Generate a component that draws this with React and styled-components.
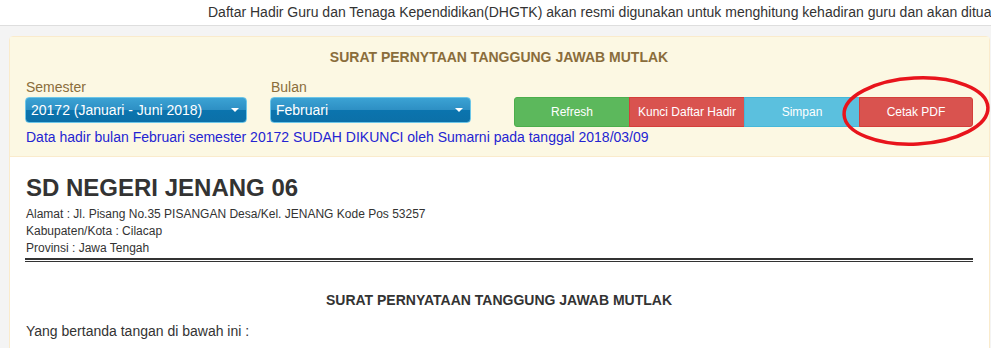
import React from 'react';
import styled, { createGlobalStyle } from 'styled-components';

const GlobalStyle = createGlobalStyle`
  html, body {
    margin: 0;
    padding: 0;
    background: #f4f4f4;
    font-family: "Liberation Sans", Arial, sans-serif;
    color: #333;
    overflow: hidden;
  }
`;

const Page = styled.div`
  position: relative;
  width: 991px;
  height: 348px;
  overflow: hidden;
`;

const TopBar = styled.div`
  height: 25px;
  background: #fff;
  border-bottom: 1px solid #dedede;
  padding-left: 208px;
  font-size: 14px;
  line-height: 24px;
  white-space: nowrap;
  overflow: hidden;
`;

const Content = styled.div`
  padding: 10px 1px 0 9px;
`;

const Panel = styled.div`
  border: 1px solid #faebcc;
  border-radius: 4px 4px 0 0;
  background: #fff;
  height: 400px;
`;

const Heading = styled.div`
  background: #fcf8e3;
  border-bottom: 1px solid #faebcc;
  padding: 11px 16px 9px 15px;
  color: #8a6d3b;
`;

const HeadingTitle = styled.div`
  text-align: center;
  font-weight: bold;
  font-size: 14px;
  line-height: 18px;
  margin-bottom: 11px;
`;

const ControlRow = styled.div`
  display: flex;
  align-items: flex-start;
`;

const Field = styled.div`
  display: flex;
  flex-direction: column;
  width: ${p => p.$width}px;
  margin-right: ${p => p.$gap || 0}px;
`;

const FieldLabel = styled.div`
  font-size: 14px;
  line-height: 20px;
  padding-left: 1px;
`;

const SelectBox = styled.div`
  height: 26px;
  box-sizing: border-box;
  display: flex;
  align-items: center;
  justify-content: space-between;
  padding: 0 7px 0 5px;
  border: 1px solid #6cc6e8;
  border-radius: 4px;
  background: linear-gradient(to bottom, #3ba2d4 0%, #2e90c4 48%, #0b74ae 52%, #0c70a8 100%);
  color: #fff;
  font-size: 14px;
`;

const Caret = styled.span`
  width: 0;
  height: 0;
  border-left: 4px solid transparent;
  border-right: 4px solid transparent;
  border-top: 4px solid #fff;
`;

const ButtonGroup = styled.div`
  display: flex;
  margin-left: auto;
  margin-top: 20px;
`;

const colors = {
  success: ['#5cb85c', '#4cae4c'],
  danger: ['#d9534f', '#d43f3a'],
  info: ['#5bc0de', '#46b8da'],
};

const Button = styled.button`
  width: ${p => p.$width || 115}px;
  height: 30px;
  border: 1px solid ${p => colors[p.$kind][1]};
  background: ${p => colors[p.$kind][0]};
  color: #fff;
  font-family: "Liberation Sans", Arial, sans-serif;
  font-size: 12px;
  padding: 0;
  border-radius: 0;
  & + & {
    margin-left: -1px;
  }
  &:first-child {
    border-radius: 3px 0 0 3px;
  }
  &:last-child {
    border-radius: 0 3px 3px 0;
  }
`;

const InfoText = styled.div`
  color: #2424d2;
  font-size: 14px;
  line-height: 20px;
  padding-left: 1px;
`;

const Body = styled.div`
  padding: 17px 16px 0 15px;
`;

const SchoolName = styled.h1`
  margin: 0 0 4px;
  font-size: 24px;
  line-height: 28px;
  font-weight: bold;
  color: #333;
  padding-left: 1px;
`;

const AddressLine = styled.div`
  font-size: 12px;
  line-height: 17px;
  padding-left: 1px;
`;

const DoubleRule = styled.div`
  margin-top: 1px;
  height: 1px;
  border-top: 2px solid #333;
  border-bottom: 1px solid #333;
`;

const LetterTitle = styled.div`
  margin-top: 29px;
  text-align: center;
  font-weight: bold;
  font-size: 14px;
  line-height: 18px;
`;

const Paragraph = styled.p`
  margin: 12px 0 0;
  font-size: 14px;
  line-height: 20px;
  padding-left: 1px;
`;

const Annotation = styled.svg`
  position: absolute;
  left: 836px;
  top: 70px;
  pointer-events: none;
`;

export default function App() {
  return (
    <Page>
      <GlobalStyle />
      <TopBar>
        Daftar Hadir Guru dan Tenaga Kependidikan(DHGTK) akan resmi digunakan untuk menghitung kehadiran guru dan akan dituangkan
      </TopBar>
      <Content>
        <Panel>
          <Heading>
            <HeadingTitle>SURAT PERNYTAAN TANGGUNG JAWAB MUTLAK</HeadingTitle>
            <ControlRow>
              <Field $width={222} $gap={23}>
                <FieldLabel>Semester</FieldLabel>
                <SelectBox>
                  <span>20172 (Januari - Juni 2018)</span>
                  <Caret />
                </SelectBox>
              </Field>
              <Field $width={201}>
                <FieldLabel>Bulan</FieldLabel>
                <SelectBox>
                  <span>Februari</span>
                  <Caret />
                </SelectBox>
              </Field>
              <ButtonGroup>
                <Button $kind="success" $width={116}>Refresh</Button>
                <Button $kind="danger" $width={116}>Kunci Daftar Hadir</Button>
                <Button $kind="info" $width={116}>Simpan</Button>
                <Button $kind="danger" $width={114}>Cetak PDF</Button>
              </ButtonGroup>
            </ControlRow>
            <InfoText>
              Data hadir bulan Februari semester 20172 SUDAH DIKUNCI oleh Sumarni pada tanggal 2018/03/09
            </InfoText>
          </Heading>
          <Body>
            <SchoolName>SD NEGERI JENANG 06</SchoolName>
            <AddressLine>Alamat : Jl. Pisang No.35 PISANGAN Desa/Kel. JENANG Kode Pos 53257</AddressLine>
            <AddressLine>Kabupaten/Kota : Cilacap</AddressLine>
            <AddressLine>Provinsi : Jawa Tengah</AddressLine>
            <DoubleRule />
            <LetterTitle>SURAT PERNYATAAN TANGGUNG JAWAB MUTLAK</LetterTitle>
            <Paragraph>Yang bertanda tangan di bawah ini :</Paragraph>
          </Body>
        </Panel>
      </Content>
      <Annotation width="160" height="82" viewBox="0 0 160 82">
        <ellipse
          cx="80"
          cy="41"
          rx="72"
          ry="33"
          transform="rotate(-3 80 41)"
          fill="none"
          stroke="#e8141c"
          strokeWidth="3.5"
        />
      </Annotation>
    </Page>
  );
}
